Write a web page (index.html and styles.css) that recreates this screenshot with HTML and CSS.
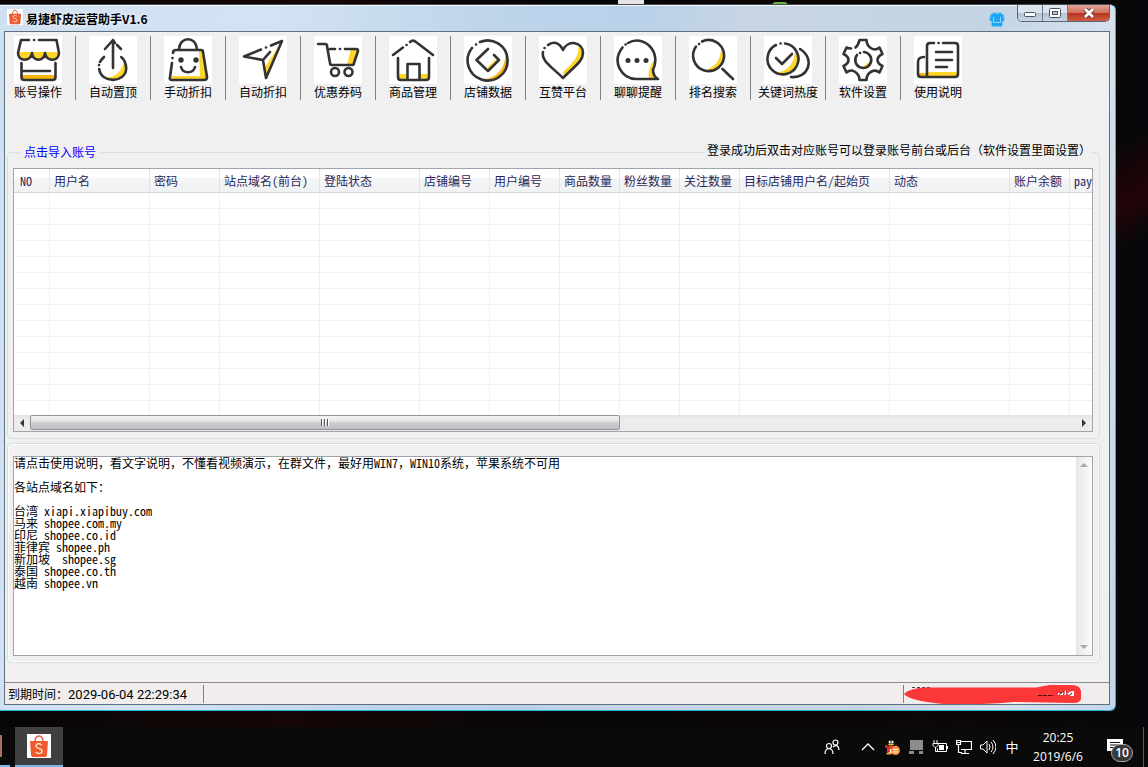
FILE: index.html
```html
<!DOCTYPE html>
<html lang="zh-CN">
<head>
<meta charset="utf-8">
<title>易捷虾皮运营助手V1.6</title>
<link rel="stylesheet" href="styles.css">
</head>
<body>
<svg class="defs" aria-hidden="true">
  <symbol id="shop-bag" viewBox="0 0 24 24">
    <rect width="24" height="24" fill="#fff"/>
    <path d="M8 8c0-8 8-8 8 0" fill="none" stroke="#e2583a" stroke-width="1.5"/>
    <path d="M3 7h18l-1 14q0 2-2 2H6q-2 0-2-2z" fill="#f15a2e"/>
    <path d="M15 11c-3-2.500-6-1-6 1 0 3 6 2 6 5 0 3-4 3-6.500 1" fill="none" stroke="#ffd9cc" stroke-width="1.500"/>
  </symbol>
</svg>
<span class="desk-paper"></span>
<span class="desk-green"></span>

<main class="window">
  <header class="titlebar">
    <svg class="title-icon" aria-hidden="true"><use href="#shop-bag"/></svg>
    <h1 class="title">易捷虾皮运营助手V1.6</h1>
    <svg class="shirt" viewBox="0 0 16 16" aria-hidden="true"><path d="M5 1.500h6l3.500 2 1 6-2 1v4l-1 1h-9l-1-1v-4l-2-1 1-6z" fill="#1ea4f4" stroke="#79c9f5"/><path d="M5 1.500q3 2 6 0M4.500 6v5m7-5v5M4 11.500h8" fill="none" stroke="#8fd8fb"/></svg>
    <div class="caption-buttons">
      <button class="cap" aria-label="最小化"><svg viewBox="0 0 14 10"><rect x="1.500" y="4.500" width="11" height="4" rx="1" fill="#fff" stroke="#4a5262"/></svg></button>
      <button class="cap" aria-label="最大化"><svg viewBox="0 0 14 10"><rect x="1.500" y=".5" width="11" height="9" rx="1" fill="#fff" stroke="#4a5262"/><rect x="4.500" y="3.500" width="5" height="3" fill="#bcc9d8" stroke="#4a5262"/></svg></button>
      <button class="cap cap-close" aria-label="关闭"><svg viewBox="0 0 14 10"><path d="m3 1 8 8m0-8-8 8" stroke="#5b3030" stroke-width="4.500"/><path d="m3 1 8 8m0-8-8 8" stroke="#fff" stroke-width="2.800"/></svg></button>
    </div>
  </header>

  <div class="client">
    <nav class="toolbar">
      <button class="tool"><svg class="ico" viewBox="0 0 48 48"><rect class="paper"/><path class="y" d="M4 16h41q-1 8-7 8-6-1-7-6-1 6-7 6t-7-6q-1 5-7 6-5-1-6-8z"/><path class="o" d="M8 39h33v4H8z"/><path d="M15 4H7L4 17c0 9 13 9 14 0 1 9 12 9 13 0 1 9 14 9 14 0L42.500 4H25M20 4h.1M7.500 27v14q0 3 3 3h28q3 0 3-3V27M8 35h28"/></svg><span>账号操作</span></button>
      <button class="tool"><svg class="ico" viewBox="0 0 48 48"><rect class="paper"/><path class="y" d="M35 22c5 10 0 22-12 22-3 0-5-1-7-3 10 2 19-7 19-19z"/><path d="M24 32V4l-8 9M24 4l2 3m2 2 4 4M15 21q-3 3-4 5m-1 3v.1m.2 3.900c2 15 26 14 27 0 0-5-1-9-5-12"/></svg><span>自动置顶</span></button>
      <button class="tool"><svg class="ico" viewBox="0 0 48 48"><rect class="paper"/><path class="y" d="M35 15h4l4 28H7l1-3h28z"/><path d="M15 13c1-13 17-13 18 0M9 17q0-3 3-3h25q2 0 2 2l4 25q0 3-3 3H8q-3 0-2-3l2-14m.5-5v.1M17 31c2 7 12 7 14 0"/><circle class="dot" cx="17" cy="24" r="2.700"/><circle class="dot" cx="32" cy="24" r="2.700"/></svg><span>手动折扣</span></button>
      <button class="tool"><svg class="ico" viewBox="0 0 48 48"><rect class="paper"/><path class="y" d="m43 5-17 26 2 12z"/><path d="m22 13.500-17 7L24 24l3 18L43 5l-11 4.500m-5 2h.1M24 24l7-8"/></svg><span>自动折扣</span></button>
      <button class="tool"><svg class="ico" viewBox="0 0 48 48"><rect class="paper"/><path class="y" d="M37 13h7l-4 16h-7z"/><path d="M4 8h7q2 0 2 2l3 17q0 2 2 2h20q2 0 2-2l4-12q0-2-2-2H31M16 13h5m5 0h.1"/><circle cx="21" cy="36" r="4"/><circle cx="34.500" cy="36" r="4"/></svg><span>优惠券码</span></button>
      <button class="tool"><svg class="ico" viewBox="0 0 48 48"><rect class="paper"/><path class="y" d="M9 38h9v6H9zM31 38h9v6h-9z"/><path d="m4 19 10-7.500M17.500 9h.1M21 6q3-3 6 0l17 13M9 22v19q0 3 3 3h25q3 0 3-3V22M18.500 43V28h12v15"/></svg><span>商品管理</span></button>
      <button class="tool"><svg class="ico" viewBox="0 0 48 48"><rect class="paper"/><path class="o" d="M41 14c8 15-4 33-21 29 15-1 23-14 21-29z"/><path class="y" d="m24 31 7-7h4L24 35z"/><path d="M8 12A20 20 0 1 0 16 6M12 8.500h.1M24 13 12.500 24 24 35l11-11-5-5"/></svg><span>店铺数据</span></button>
      <button class="tool"><svg class="ico" viewBox="0 0 48 48"><rect class="paper"/><path class="y" d="M39 8c7 5 7 11 2 17L25 41l-1-5c12-11 17-17 15-28z"/><path d="M9 9c5-4 11-3 15 5 5-11 20-8 20 3 0 8-8 13-20 25C13 31 2 25 4 16M5.500 12h.1"/></svg><span>互赞平台</span></button>
      <button class="tool"><svg class="ico" viewBox="0 0 48 48"><rect class="paper"/><path class="y" d="M40 24q0 8-1 10 1 5 5 9h-9c-1-6 0-12 5-19z"/><path d="M8.500 11.500C-3 26 8 43 22 43h22q-5-3-5-9C48 15 29-2 14 7M11.500 8.500h.1"/><circle class="dot" cx="14" cy="24.500" r="2.500"/><circle class="dot" cx="23" cy="24.500" r="2.500"/><circle class="dot" cx="32" cy="24.500" r="2.500"/></svg><span>聊聊提醒</span></button>
      <button class="tool"><svg class="ico" viewBox="0 0 48 48"><rect class="paper"/><path class="y" d="M32 12c7 14-4 28-20 23 13-2 20-10 20-23z"/><path d="M7 10.500A15.500 15.500 0 1 0 13 5.500M10 8h.1M33.500 33 44 43"/></svg><span>排名搜索</span></button>
      <button class="tool"><svg class="ico" viewBox="0 0 48 48"><rect class="paper"/><path class="y" d="M31 14c9 15-4 29-20 23 13-1 20-10 20-23z"/><path d="M12 9A15.500 15.500 0 1 0 21 7.500M16.500 7.500h.1M12 22l6 6 10-10M36 13c16 10 8 30-9 28"/></svg><span>关键词热度</span></button>
      <button class="tool"><svg class="ico" viewBox="0 0 48 48"><rect class="paper"/><path class="y" d="M31 19q1 10-10 12c7 4 13-5 10-12z"/><path d="M12 12.500q-2 0-4.500-1l-3 6.500c4 2 5 4 5 6s-1 4-5 6l3 6.500c2.500-2 5.500-2.500 8-1s5 3.500 5 8.500h7c0-5 2-7 5-8.500s5.500-1 8 1l3-6.500c-4-2-5-4-5-6s1-4 5-6l-3-6.500c-2.500 2-5.500 2.500-8 1S27.500 9 27.500 4h-7q-1 5-4 7.500M18 19a8 8 0 1 0 7-3M21 17h.1"/></svg><span>软件设置</span></button>
      <button class="tool"><svg class="ico" viewBox="0 0 48 48"><rect class="paper"/><path class="y" d="M13 36h31v5H13z"/><path class="o" d="M4 37h9v4H4z"/><path d="M20 7h-4q-3 0-3 3v31h28q3 0 3-3V10q0-3-3-3H29M24.500 7h.1M10 21q-6 0-6 5v12q0 3 3 3h6M22 16h16M22 24h16M22 31h11"/></svg><span>使用说明</span></button>
    </nav>

    <fieldset class="group accounts">
      <legend><button class="import">点击导入账号</button></legend>
      <p class="hint">登录成功后双击对应账号可以登录账号前台或后台（软件设置里面设置）</p>
      <div class="list">
        <div class="list-view">
          <table class="grid">
            <colgroup><col class="w36"><col class="w100"><col class="w70"><col class="w100"><col class="w100"><col class="w70"><col class="w70"><col class="w60"><col class="w60"><col class="w60"><col class="w150"><col class="w120"><col class="w60"><col class="w60"></colgroup>
            <thead><tr><th>NO</th><th>用户名</th><th>密码</th><th>站点域名(前台)</th><th>登陆状态</th><th>店铺编号</th><th>用户编号</th><th>商品数量</th><th>粉丝数量</th><th>关注数量</th><th>目标店铺用户名/起始页</th><th>动态</th><th>账户余额</th><th>pay</th></tr></thead>
            <tbody>
              <tr><td></td><td></td><td></td><td></td><td></td><td></td><td></td><td></td><td></td><td></td><td></td><td></td><td></td><td></td></tr>
              <tr><td></td><td></td><td></td><td></td><td></td><td></td><td></td><td></td><td></td><td></td><td></td><td></td><td></td><td></td></tr>
              <tr><td></td><td></td><td></td><td></td><td></td><td></td><td></td><td></td><td></td><td></td><td></td><td></td><td></td><td></td></tr>
              <tr><td></td><td></td><td></td><td></td><td></td><td></td><td></td><td></td><td></td><td></td><td></td><td></td><td></td><td></td></tr>
              <tr><td></td><td></td><td></td><td></td><td></td><td></td><td></td><td></td><td></td><td></td><td></td><td></td><td></td><td></td></tr>
              <tr><td></td><td></td><td></td><td></td><td></td><td></td><td></td><td></td><td></td><td></td><td></td><td></td><td></td><td></td></tr>
              <tr><td></td><td></td><td></td><td></td><td></td><td></td><td></td><td></td><td></td><td></td><td></td><td></td><td></td><td></td></tr>
              <tr><td></td><td></td><td></td><td></td><td></td><td></td><td></td><td></td><td></td><td></td><td></td><td></td><td></td><td></td></tr>
              <tr><td></td><td></td><td></td><td></td><td></td><td></td><td></td><td></td><td></td><td></td><td></td><td></td><td></td><td></td></tr>
              <tr><td></td><td></td><td></td><td></td><td></td><td></td><td></td><td></td><td></td><td></td><td></td><td></td><td></td><td></td></tr>
              <tr><td></td><td></td><td></td><td></td><td></td><td></td><td></td><td></td><td></td><td></td><td></td><td></td><td></td><td></td></tr>
              <tr><td></td><td></td><td></td><td></td><td></td><td></td><td></td><td></td><td></td><td></td><td></td><td></td><td></td><td></td></tr>
              <tr><td></td><td></td><td></td><td></td><td></td><td></td><td></td><td></td><td></td><td></td><td></td><td></td><td></td><td></td></tr>
              <tr><td></td><td></td><td></td><td></td><td></td><td></td><td></td><td></td><td></td><td></td><td></td><td></td><td></td><td></td></tr>
            </tbody>
          </table>
        </div>
        <div class="hscroll">
          <button class="arrow" aria-label="向左滚动"><svg viewBox="0 0 8 8"><path d="M6 0v8L2 4z" fill="#333"/></svg></button>
          <div class="track"><div class="thumb"><i></i><i></i><i></i></div></div>
          <button class="arrow" aria-label="向右滚动"><svg viewBox="0 0 8 8"><path d="M2 0v8l4-4z" fill="#333"/></svg></button>
        </div>
      </div>
    </fieldset>

    <fieldset class="group notes">
      <div class="memo">
        <textarea aria-label="使用说明" spellcheck="false">请点击使用说明，看文字说明，不懂看视频演示，在群文件，最好用WIN7，WIN10系统，苹果系统不可用

各站点域名如下：

台湾 xiapi.xiapibuy.com
马来 shopee.com.my
印尼 shopee.co.id
菲律宾 shopee.ph
新加坡  shopee.sg
泰国 shopee.co.th
越南 shopee.vn</textarea>
        <div class="vscroll">
          <button class="arrow" aria-label="向上滚动" disabled><svg viewBox="0 0 8 8"><path d="M0 6h8L4 2z" fill="#aaa"/></svg></button>
          <button class="arrow" aria-label="向下滚动" disabled><svg viewBox="0 0 8 8"><path d="M0 2h8L4 6z" fill="#aaa"/></svg></button>
        </div>
      </div>
    </fieldset>

    <footer class="status">
      <div class="pane pane-date">到期时间：<time>2029-06-04 22:29:34</time></div>
      <div class="pane pane-fill"></div>
      <div class="pane pane-mark"><svg class="scribble" viewBox="0 0 178 19" aria-hidden="true"><path d="M8 2.500h20" stroke="#444" stroke-dasharray="3 2"/><path d="M0 9Q6 3 22 2.500h110q8-2 14-2.500h22q8 0 9 6v8q-1 4-7 4l-60-1q-30 3-70 2Q6 16 0 9z" fill="#fb3737"/><path d="M154 9h4l3-2v3m3-1q3-2 5-2v3h-4" fill="none" stroke="#fff" stroke-width="2"/><path d="M134 10.500h16m5-1 5-3v3m5 1 4-3" stroke="#3b1515" fill="none" stroke-dasharray="4 1"/></svg></div>
    </footer>
  </div>
</main>

<footer class="taskbar">
  <span class="task-cut"></span>
  <button class="task" aria-label="易捷虾皮运营助手"><svg aria-hidden="true"><use href="#shop-bag"/></svg></button>
  <div class="tray">
    <svg class="people" viewBox="0 0 16 16"><g fill="none" stroke="#fff" stroke-width="1.200"><circle cx="5" cy="7" r="2.500"/><path d="M1 15c0-7 8-7 8 0"/><circle cx="11.500" cy="3.500" r="2.500"/><path d="M9 8c3-3 6-1 6 3"/></g></svg>
    <svg viewBox="0 0 16 16"><path d="m2 11 6-6 6 6" fill="none" stroke="#fff" stroke-width="1.300"/></svg>
    <svg viewBox="0 0 16 16"><ellipse cx="7" cy="9" rx="6" ry="6" fill="#151515"/><path d="M3 6c-1-7 9-7 8 0z" fill="#151515"/><ellipse cx="5.700" cy="3" rx="1" ry="1.500" fill="#fff"/><ellipse cx="8.500" cy="3" rx="1" ry="1.500" fill="#fff"/><ellipse cx="7" cy="5.500" rx="3" ry="1" fill="#f6b21d"/><ellipse cx="7" cy="11" rx="4" ry="3.500" fill="#fff"/><path d="M1 6q6 3.500 12 0v2.500Q9 10.500 6 10v3.500H3V9L1 8z" fill="#e92c2c"/><path d="M2 14.500q3-2 6 0l-1 1H3z" fill="#f5a623"/><circle cx="11.500" cy="11.500" r="4.500" fill="#ff9138"/><path d="M9 10.500h5M9 13h5" stroke="#fff"/></svg>
    <svg viewBox="0 0 16 16"><path d="M2 1h13v10H2zM1 12h5v3H1zM11 12h4v3h-4z" fill="#8c8c8c"/></svg>
    <svg viewBox="0 0 16 16"><path d="M5.500 4.500h9v8h-9v-3M15.500 7v3M2 1v3m3-3v3M1 4.500h5v2l-2 2H3l-2-2zM3.500 8v4.500h2" fill="none" stroke="#fff"/><path d="M7 6h5v5H7z" fill="#fff"/></svg>
    <svg viewBox="0 0 16 16"><path d="M5 2.500h10.500v8H5M5 14.500h8M9 11v3M.5 1.500h4v4h-4zM2.500 6v7.500H6M1 3.500h3" fill="none" stroke="#fff" stroke-width="1.200"/></svg>
    <svg viewBox="0 0 16 16"><path d="M.5 6h2.500l4-4v12l-4-4H.5zM9 5q2 3 0 6m2-8q4 5 0 10m2-12q6 7 0 14" fill="none" stroke="#fff"/></svg>
    <span class="ime">中</span>
  </div>
  <div class="clock"><time>20:25</time><time>2019/6/6</time></div>
  <button class="notify" aria-label="通知"><svg viewBox="0 0 16 15"><path d="M0 0h16v12h-8l-3 3v-3H0z" fill="#fff"/><path d="M3 3.500h10M3 6h10M3 8.500h6" stroke="#111"/></svg><span class="badge">10</span></button>
  <span class="show-desktop"></span>
</footer>
</body>
</html>
```

FILE: styles.css
```css
* { box-sizing: border-box; }

body {
  display: flex;
  flex-direction: column;
  height: 100vh;
  margin: 0;
  overflow: hidden;
  background:
    linear-gradient(150deg, transparent 30%, #1d0406 48%, #220508 54%, transparent 70%) right 60px / 32px 260px no-repeat,
    linear-gradient(90deg, #070506, #160606 25%, #070506 50%, #0c0606 80%, #06070a);
  font: 12px/16px "Noto Sans CJK SC", sans-serif;
  color: #000;
}

button {
  margin: 0;
  padding: 0;
  border: 0;
  background: none;
  font: inherit;
  color: inherit;
}

.defs { position: absolute; width: 0; height: 0; }

.desk-paper, .desk-green { position: absolute; top: 0; left: 618px; width: 26px; height: 4px; background: #e8e4e4; }
.desk-green { top: 2px; left: 772px; width: 16px; height: 4px; border-radius: 8px 8px 0 0; background: #6cb43c; }

/* Application window */
.window {
  position: relative;
  display: flex;
  flex: 1;
  flex-direction: column;
  min-height: 0;
  margin: 4px 32px 16px 0;
  padding: 0 5px 5px 4px;
  border: solid #25b4dc;
  border-width: 1px 1px 1px 0;
  border-top-color: #454c56;
  border-radius: 0 6px 6px 0;
  background: linear-gradient(100deg, #cfe0f0, #d3e3f3 22%, #bdd4eb 40%, #b9d1e9 52%, #c7d5e4 60%, #c5d4e3 80%, #d5e2ee 90%, #c2d6ea);
  box-shadow: inset 0 1px #f4f9fd;
}

.titlebar { display: flex; align-items: flex-start; height: 26px; padding-left: 3px; }
.title-icon { width: 16px; height: 16px; margin-top: 4px; }
.title { margin: 6px auto 0 3px; font-size: 12px; line-height: 16px; font-weight: 700; text-shadow: 0 0 6px #fff; }
.shirt { width: 16px; height: 16px; margin: 6px 12px 0 0; }
.caption-buttons { display: flex; border: 1px solid #5b6675; border-top: 0; border-radius: 0 0 5px 5px; overflow: hidden; }
.cap {
  display: grid;
  place-items: center;
  width: 25px;
  height: 16px;
  border-right: 1px solid #6d7988;
  background: linear-gradient(#dce5ee 50%, #b3c2d2 50%, #c9d6e3);
}
.cap svg { width: 14px; height: 10px; }
.cap-close { width: 41px; border-right: 0; background: linear-gradient(#e2a497, #d1705d 48%, #b73221 50%, #cf5d42); }

.client {
  display: flex;
  flex: 1;
  flex-direction: column;
  min-height: 0;
  border: 1px solid #5f6f80;
  background: #f0f0f0;
}

/* Toolbar */
.toolbar { display: flex; gap: 13px; padding: 4px 0 0 9px; }
.tool {
  display: flex;
  flex-direction: column;
  align-items: center;
  width: 62px;
  padding-right: 13px;
  border-right: 1px solid #808080;
  white-space: nowrap;
}
.tool:last-child { border-right-color: transparent; }
.ico {
  width: 48px;
  height: 48px;
  flex: none;
  fill: none;
  stroke: #333;
  stroke-width: 2.6;
  stroke-linecap: round;
  stroke-linejoin: round;
}
.ico .paper { width: 48px; height: 48px; fill: #fff; stroke: none; }
.ico .y { fill: #ffd52a; stroke: none; }
.ico .o { fill: #f9b70d; stroke: none; }
.ico .dot { fill: #333; stroke: none; }

/* Group boxes */
.group {
  position: relative;
  min-width: 0;
  margin: 0 9px 0 2px;
  padding: 12px 6px 6px 5px;
  border: 1px solid #d5dfe8;
  border-radius: 4px;
  box-shadow: inset 0 0 0 1px #fcfcfc;
}
.accounts {
  display: flex;
  flex: 1;
  flex-direction: column;
  min-height: 0;
  margin-top: 44px;
  padding-top: 8px;
  box-shadow: none;
}
.accounts legend { margin-left: 6px; padding: 0 5px; }
.import { display: block; color: #00f; }
.hint {
  position: absolute;
  top: -18px;
  right: 6px;
  margin: 0;
  padding: 0 2px;
  background: #f0f0f0;
}
.notes { margin-top: 4px; margin-bottom: 19px; }

/* Account list */
.list {
  display: flex;
  flex: 1;
  flex-direction: column;
  min-height: 0;
  border: 1px solid #a0a5ad;
  background: #fff;
}
.list-view { flex: 1; min-height: 0; overflow: hidden; }
.grid { width: 1116px; border-collapse: separate; border-spacing: 0; table-layout: fixed; }
.w36 { width: 36px; }
.w60 { width: 60px; }
.w70 { width: 70px; }
.w100 { width: 100px; }
.w120 { width: 120px; }
.w150 { width: 150px; }
.grid th {
  height: 24px;
  padding: 0 0 0 4px;
  border-right: 1px solid #e2e4e7;
  border-bottom: 1px solid #d5d5d5;
  background: linear-gradient(#fff 40%, #f5f6f8 40%, #eff1f3);
  font-family: "Noto Sans Mono CJK SC", "Noto Sans CJK SC", sans-serif;
  font-weight: 400;
  text-align: left;
  white-space: nowrap;
  color: #2b2858;
}
.grid th:first-child { padding-left: 6px; }
.grid td { height: 16px; padding: 0; border-right: 1px solid #f0f0f0; border-bottom: 1px solid #f0f0f0; }

.arrow { display: grid; place-items: center; width: 16px; height: 16px; flex: none; }
.arrow svg { width: 8px; height: 8px; }
.hscroll { display: flex; height: 16px; flex: none; background: linear-gradient(#e3e3e3, #ededed 30%, #ebebeb); }
.track { flex: 1; }
.thumb {
  display: flex;
  align-items: center;
  justify-content: center;
  gap: 1px;
  width: 56.4%;
  height: 15px;
  border: 1px solid #959595;
  border-radius: 2px;
  background: linear-gradient(#f3f3f3, #e3e3e5 45%, #cfcfd2 50%, #bfbfc3);
}
.thumb i { width: 2px; height: 7px; border-left: 1px solid #555; background: #fff; }

/* Notes */
.memo { display: flex; height: 200px; border: 1px solid #a0a5ad; background: #fff; }
.memo textarea {
  flex: 1;
  padding: 0;
  border: 0;
  outline: 0;
  resize: none;
  overflow: hidden;
  background: #fff;
  font: 12px/12px "Noto Sans Mono CJK SC", "Noto Sans CJK SC", monospace;
  color: #000;
}
.vscroll {
  display: flex;
  flex-direction: column;
  justify-content: space-between;
  width: 16px;
  background: linear-gradient(90deg, #e6e6e6, #fcfcfc);
}

/* Status bar */
.status { display: flex; height: 22px; padding-top: 2px; border-top: 1px solid #8a8a8a; background: #f1edec; }
.pane { height: 18px; border-right: 1px solid #808080; line-height: 18px; }
.pane-date { width: 199px; padding-left: 3px; white-space: nowrap; }
.pane-date time { font-family: Roboto, sans-serif; font-size: 13px; }
.pane-fill { flex: 1; }
.pane-mark { width: 205px; border-right: 0; }
.scribble { display: block; width: 178px; height: 19px; }

/* Taskbar */
.taskbar { display: flex; align-items: stretch; height: 40px; flex: none; background: #0a0a0a; color: #fff; }
.task-cut {
  width: 10px;
  margin-right: 5px;
  border-bottom: 2px solid #76b9ed;
  background: linear-gradient(#a8705f, #a8705f) 0 8px / 2px 22px no-repeat;
}
.task { display: grid; place-items: center; width: 48px; border-bottom: 2px solid #76b9ed; background: #404040; }
.task svg { width: 24px; height: 24px; }
.tray { display: flex; align-items: center; gap: 8px; margin-left: auto; }
.tray svg { width: 16px; height: 16px; }
.tray .people { margin-right: 12px; }
.ime { width: 16px; font-size: 13px; text-align: center; }
.clock {
  display: flex;
  flex-direction: column;
  align-items: center;
  width: 76px;
  padding-top: 1px;
  font: 12px/19px "Open Sans", sans-serif;
}
.notify { position: relative; width: 38px; }
.notify svg { position: absolute; top: 12px; left: 11px; width: 16px; height: 15px; }
.badge {
  position: absolute;
  top: 17px;
  left: 15px;
  width: 22px;
  height: 18px;
  border: 1px solid #aaa;
  border-radius: 9px;
  background: #383838;
  font: 600 12px/16px "Open Sans", sans-serif;
  text-align: center;
}
.show-desktop { width: 5px; margin-left: 9px; border-left: 1px solid #5a5a5a; }
```
